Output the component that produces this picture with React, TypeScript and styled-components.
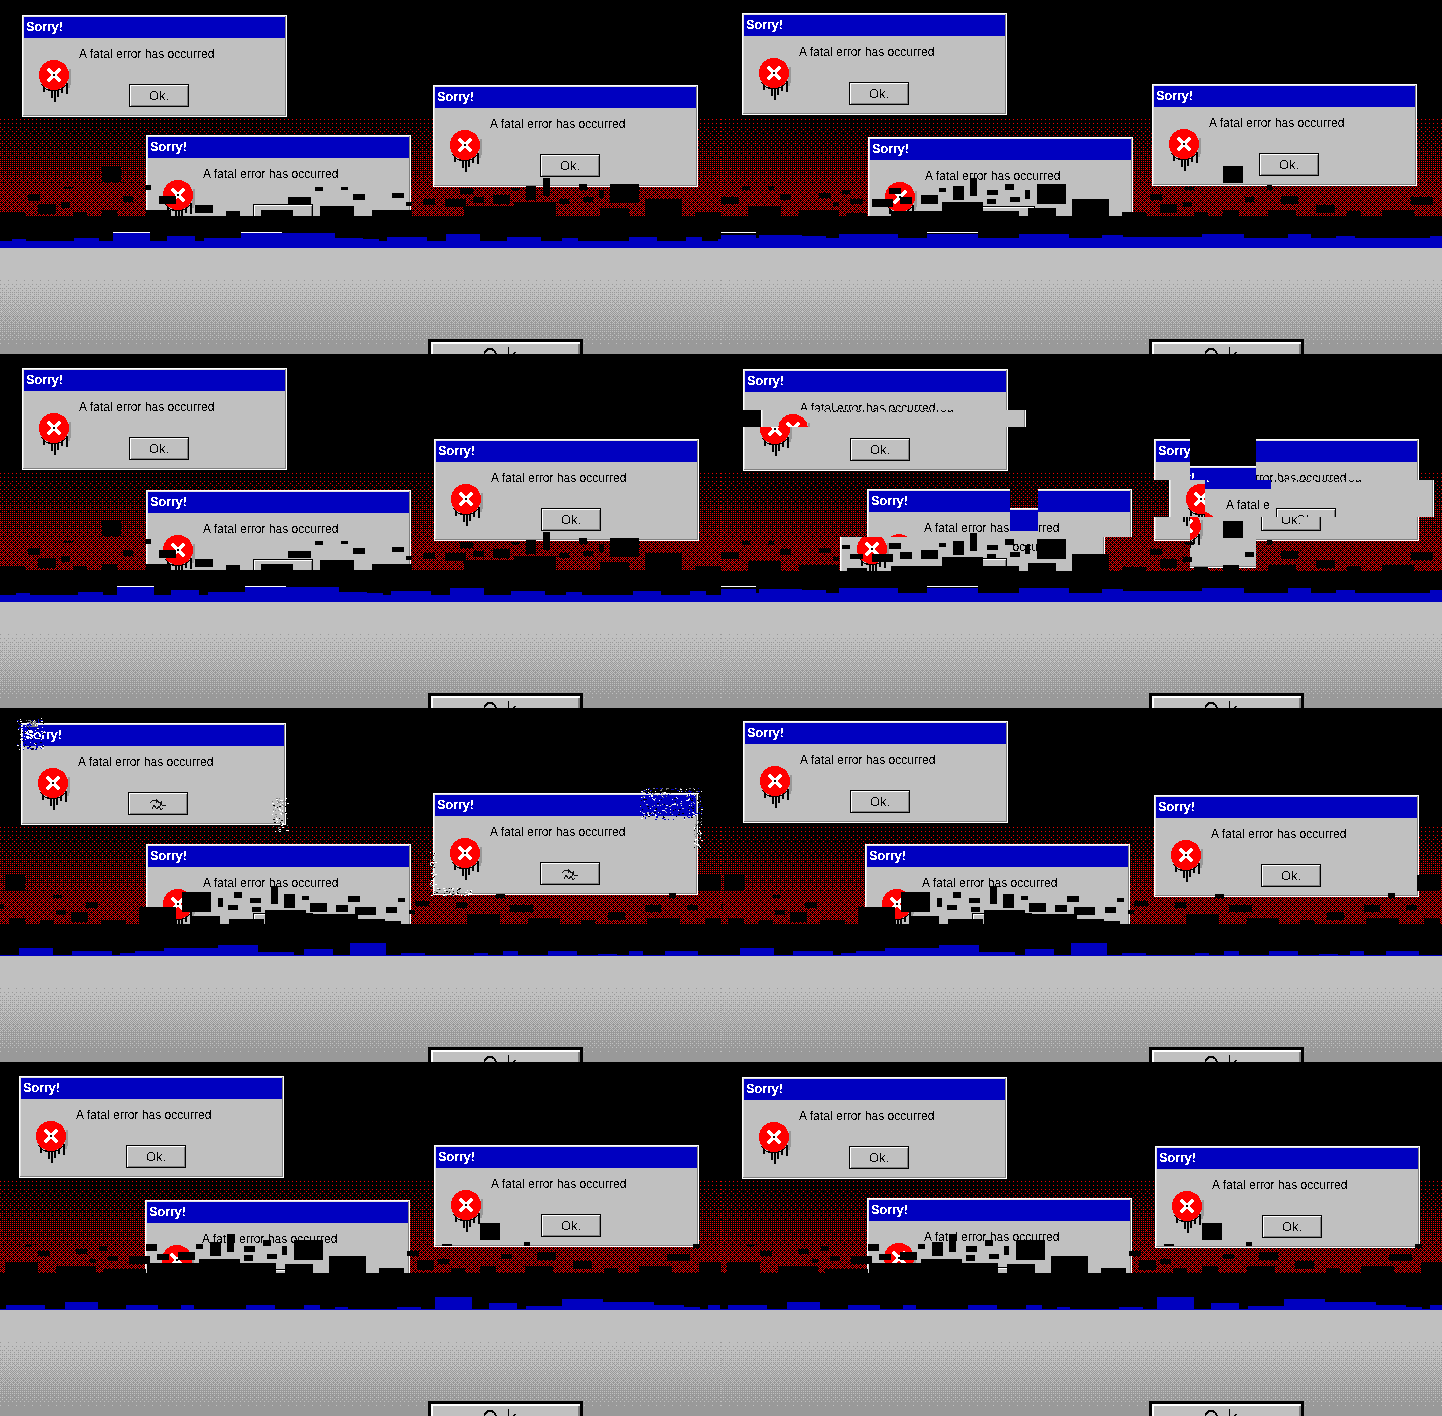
import React, { useEffect, useRef } from "react";
import styled, { createGlobalStyle } from "styled-components";

const WIN_W = 265;
const WIN_H = 102;

const GlobalStyle = createGlobalStyle`
  html, body {
    margin: 0;
    background: #000;
  }
`;

const Page = styled.div`
  display: grid;
  grid-template-columns: 721px 721px;
  grid-auto-rows: 354px;
  width: 1442px;
  overflow: hidden;
`;

const Tile = styled.div<{ $cut: number; $base: number }>`
  position: relative;
  overflow: hidden;
  display: grid;
  grid-template-rows: 110px ${(p) => p.$cut - 110}px ${(p) => p.$base - p.$cut}px ${(p) => 248 - p.$base}px 106px;
  background: #000;
`;

const BlackStrip = styled.div`
  position: relative;
  z-index: 2;
  background: #000;
`;

const BlueStrip = styled.div`
  position: relative;
  z-index: 2;
  background: #0000c0;
`;

const Floor = styled.div`
  position: relative;
  z-index: 2;
  overflow: hidden;
`;

const DitherCanvas = styled.canvas`
  display: block;
`;

const BigOk = styled.div`
  position: absolute;
  left: 428px;
  top: 91px;
  width: 155px;
  height: 40px;
  box-sizing: border-box;
  border: 3px solid #000;
  padding-left: 51px;
  background: #c0c0c0;
  box-shadow: inset 2px 2px 0 #fff, inset -2px -2px 0 #808080;
`;

const BigOkLabel = styled.span`
  display: inline-block;
  font: 26px/30px "Liberation Sans", Arial, sans-serif;
  letter-spacing: 10px;
  transform: scaleX(0.8);
  transform-origin: left top;
  color: #000;
  filter: url(#crisp);
`;

const Overlay = styled.svg`
  position: absolute;
  left: 0;
  top: 0;
  z-index: 3;
  pointer-events: none;
`;

const Spot = styled.div.attrs<{ $x: number; $y: number }>((p) => ({
  style: { left: p.$x, top: p.$y },
}))<{ $x: number; $y: number }>`
  position: absolute;
  z-index: 1;
  width: ${WIN_W}px;
  height: ${WIN_H}px;
`;

const Frame = styled.div`
  width: ${WIN_W}px;
  height: ${WIN_H}px;
  box-sizing: border-box;
  border: 1px solid #fff;
  padding: 1px;
  background: #c0c0c0;
  box-shadow: inset -1px -1px 0 #808080, inset 1px 1px 0 #dfdfdf;
  display: flex;
  flex-direction: column;
`;

const Slice = styled(Frame)`
  position: absolute;
  left: 0;
  top: 0;
`;

const TitleBar = styled.div`
  height: 21px;
  flex: none;
  background: #0000c0;
  color: #fff;
  font: bold 13px/20px "Liberation Sans", Arial, sans-serif;
  letter-spacing: -0.3px;
  padding-left: 2px;
`;

const Body = styled.div`
  display: flex;
  padding: 10px 0 0 13px;
`;

const IconBox = styled.svg`
  flex: none;
  margin-top: 12px;
`;

const Column = styled.div`
  display: flex;
  flex-direction: column;
  margin-left: 2px;
`;

const Message = styled.div`
  font: 12px/13px "Liberation Sans", Arial, sans-serif;
  letter-spacing: 0.03px;
  color: #000;
  white-space: nowrap;
  filter: url(#crisp);
`;

const OkButton = styled.div`
  margin: 23px 0 0 50px;
  width: 60px;
  height: 23px;
  box-sizing: border-box;
  border: 1px solid #000;
  background: #c0c0c0;
  box-shadow: inset 1px 1px 0 #fff, inset -1px -1px 0 #808080;
  display: flex;
  align-items: center;
  justify-content: center;
  font: 13px/21px "Liberation Sans", Arial, sans-serif;
  color: #000;
`;

const OkLabel = styled.span`
  filter: url(#crisp);
`;

const HiddenDefs = styled.svg`
  position: absolute;
  width: 0;
  height: 0;
`;

type Rect = [number, number, number, number];
type Piece = [number, number, number, number, number, number]; // dest x, y, w, h, then dx, dy

interface WinSpec {
  x: number;
  y: number;
  pieces?: Piece[];
  garbled?: boolean;
}

interface TileSpec {
  wins: WinSpec[];
  blocks: Rect[];
  blockDx?: number;
  blockDy?: number;
  bars: number[][];
  barDx?: number;
  lines?: number[][];
  cut: number;
  base: number;
  speckle?: boolean;
}

const BLOCKS_A: Rect[] = [
  [102, 166, 19, 16], [28, 194, 12, 7], [38, 204, 18, 10], [61, 202, 9, 6], [123, 196, 10, 6], [64, 187, 9, 2],
  [145, 185, 6, 5], [159, 196, 17, 8], [195, 205, 18, 8], [226, 211, 14, 6], [315, 187, 8, 4], [341, 187, 7, 3],
  [353, 194, 12, 6], [392, 193, 12, 5], [406, 202, 6, 4], [288, 197, 23, 7], [261, 210, 32, 6], [320, 206, 34, 10],
  [372, 210, 40, 6], [146, 210, 25, 6], [0, 212, 25, 4], [73, 212, 14, 4], [102, 210, 15, 6],
  [610, 184, 29, 19], [645, 199, 37, 17], [600, 208, 29, 8], [543, 178, 7, 18], [526, 186, 10, 14], [514, 202, 42, 14],
  [464, 206, 50, 10], [579, 184, 8, 6], [473, 197, 11, 6], [493, 195, 17, 9], [445, 199, 21, 8], [423, 199, 12, 6],
  [559, 199, 10, 5], [583, 197, 10, 5], [599, 190, 5, 8], [460, 188, 13, 6], [512, 188, 7, 3], [695, 212, 26, 4],
];

const BLOCKS_B: Rect[] = [
  [316, 184, 29, 20], [351, 199, 37, 17], [249, 178, 7, 18], [232, 186, 11, 14], [218, 188, 7, 4], [200, 195, 17, 9],
  [221, 202, 41, 14], [266, 190, 11, 5], [266, 199, 9, 5], [284, 184, 9, 6], [289, 197, 10, 5], [304, 190, 5, 9],
  [151, 199, 21, 8], [168, 188, 12, 6], [179, 197, 12, 7], [170, 211, 128, 5], [307, 208, 28, 8], [401, 212, 24, 4],
  [0, 197, 18, 7], [27, 206, 33, 10], [59, 194, 11, 6], [21, 186, 8, 4], [47, 186, 6, 4], [98, 193, 12, 5],
  [121, 190, 8, 4], [112, 202, 6, 4], [129, 199, 13, 5], [78, 210, 40, 6], [126, 213, 20, 3],
  [502, 166, 20, 17], [546, 185, 5, 5], [464, 187, 9, 3], [429, 194, 12, 6], [462, 202, 9, 5], [524, 197, 9, 5],
  [560, 196, 17, 8], [439, 204, 17, 9], [595, 205, 19, 8], [690, 197, 22, 8], [473, 212, 14, 4], [502, 210, 16, 6],
  [547, 210, 28, 6], [626, 211, 14, 5], [661, 210, 32, 6],
];

const BLOCKS_C: Rect[] = [
  [5, 167, 20, 16], [182, 184, 29, 20], [139, 199, 37, 17], [190, 208, 30, 8], [218, 190, 5, 9], [234, 184, 8, 6],
  [228, 197, 10, 5], [250, 190, 11, 5], [252, 199, 9, 5], [271, 178, 7, 18], [284, 186, 11, 14], [302, 188, 7, 4],
  [310, 195, 17, 9], [336, 197, 12, 7], [348, 188, 12, 6], [355, 199, 21, 8], [386, 199, 11, 6], [398, 190, 7, 4],
  [265, 202, 41, 14], [229, 211, 35, 5], [306, 206, 52, 10], [358, 211, 27, 5], [385, 213, 16, 3],
  [86, 194, 12, 6], [71, 204, 17, 10], [56, 202, 10, 5], [101, 212, 25, 4], [40, 212, 14, 4], [9, 210, 16, 6],
  [0, 196, 4, 5], [53, 187, 9, 3], [415, 193, 14, 5], [456, 194, 11, 6], [467, 206, 33, 10], [510, 197, 23, 7],
  [528, 210, 32, 6], [581, 212, 14, 4], [608, 204, 17, 8], [645, 197, 16, 7], [647, 210, 33, 6], [687, 197, 11, 5],
  [705, 210, 16, 6], [698, 167, 23, 16], [409, 202, 6, 4], [669, 185, 7, 5], [496, 186, 9, 4],
];

const BLOCKS_D: Rect[] = [
  [294, 178, 29, 20], [329, 194, 37, 17], [379, 206, 25, 5], [285, 202, 28, 9], [199, 197, 41, 14], [210, 180, 11, 14],
  [227, 172, 7, 18], [196, 182, 7, 5], [146, 182, 11, 7], [129, 194, 21, 8], [157, 192, 12, 6], [178, 190, 17, 8],
  [244, 184, 11, 6], [244, 193, 9, 6], [263, 178, 8, 6], [267, 192, 10, 5], [282, 184, 5, 9], [147, 201, 129, 10],
  [5, 200, 33, 11], [56, 204, 40, 7], [103, 207, 43, 4], [38, 189, 12, 5], [76, 187, 11, 5], [99, 184, 8, 5],
  [108, 194, 10, 5], [90, 197, 6, 4], [25, 182, 7, 3], [407, 189, 12, 5], [417, 198, 17, 10], [438, 197, 11, 5],
  [451, 206, 14, 5], [480, 204, 16, 7], [480, 161, 20, 17], [501, 192, 11, 5], [537, 190, 19, 8], [525, 204, 28, 7],
  [573, 199, 19, 8], [604, 206, 14, 5], [639, 204, 33, 7], [667, 192, 23, 7], [699, 200, 22, 11], [442, 182, 10, 2],
  [524, 180, 6, 4], [693, 182, 7, 4],
];

const BARS_A = [
  [12, 239, 14], [74, 238, 25], [113, 233, 37], [167, 236, 28], [204, 238, 37], [241, 233, 94], [335, 238, 28],
  [363, 239, 16], [387, 237, 40], [446, 234, 34], [507, 237, 34], [562, 238, 16], [629, 237, 28], [686, 237, 16], [718, 239, 3],
];
const BARS_B = [
  [0, 235, 35], [38, 235, 43], [81, 236, 24], [118, 234, 59], [206, 234, 51], [298, 234, 50], [381, 235, 21],
  [402, 237, 79], [481, 234, 42], [567, 234, 23], [615, 236, 19], [709, 236, 12],
];
const BARS_C = [
  [19, 240, 34], [72, 243, 40], [120, 245, 15], [135, 243, 29], [164, 240, 54], [218, 237, 40], [258, 244, 36],
  [304, 241, 29], [350, 235, 36], [401, 245, 24], [474, 245, 14], [503, 243, 15], [548, 243, 29], [598, 246, 19],
  [629, 243, 14], [665, 243, 33],
];
const BARS_D = [
  [6, 243, 39], [65, 240, 33], [126, 243, 32], [181, 243, 13], [246, 243, 29], [304, 243, 16], [335, 245, 13],
  [397, 245, 24], [435, 235, 37], [489, 241, 28], [526, 244, 36], [562, 237, 41], [603, 240, 51], [654, 243, 30],
  [684, 245, 16], [708, 243, 12],
];

const TILES: TileSpec[] = [
  {
    wins: [{ x: 22, y: 15 }, { x: 146, y: 135 }, { x: 433, y: 85 }],
    blocks: BLOCKS_A,
    bars: BARS_A,
    lines: [[113, 232, 37], [241, 232, 41]],
    cut: 216,
    base: 241,
  },
  {
    wins: [{ x: 21, y: 13 }, { x: 147, y: 137 }, { x: 431, y: 84 }],
    blocks: BLOCKS_B,
    bars: BARS_B,
    lines: [[0, 232, 35], [206, 232, 51]],
    cut: 216,
    base: 238,
  },
  {
    wins: [{ x: 22, y: 14 }, { x: 146, y: 136 }, { x: 434, y: 85 }],
    blocks: BLOCKS_A,
    bars: BARS_A,
    barDx: 4,
    lines: [[117, 232, 37], [245, 232, 41]],
    cut: 216,
    base: 241,
  },
  {
    wins: [
      {
        x: 22,
        y: 15,
        pieces: [[0, 0, 265, 41, 0, 0], [18, 41, 265, 17, 18, 0], [0, 58, 265, 44, 0, 0]],
      },
      {
        x: 146,
        y: 135,
        pieces: [
          [0, 0, 143, 48, 0, 0],
          [171, 0, 94, 48, 0, 0],
          [-27, 48, 170, 54, -27, 0],
          [171, 48, 67, 54, -27, 0],
          [143, 19, 28, 83, 0, 19],
        ],
      },
      {
        x: 433,
        y: 85,
        pieces: [
          [0, 0, 36, 41, 0, 0],
          [102, 0, 163, 41, 0, 0],
          [36, 27, 66, 14, 0, 27],
          [15, 41, 36, 37, 15, 0],
          [51, 41, 66, 37, 15, 27],
          [117, 41, 163, 37, 15, 0],
          [0, 78, 36, 24, 0, 0],
          [102, 78, 163, 24, 0, 0],
          [36, 78, 66, 51, 0, 27],
        ],
      },
    ],
    blocks: BLOCKS_B,
    blockDy: 1,
    bars: BARS_B,
    lines: [[0, 232, 35], [206, 232, 51]],
    cut: 217,
    base: 239,
  },
  {
    wins: [{ x: 21, y: 15, garbled: true }, { x: 146, y: 136 }, { x: 433, y: 85, garbled: true }],
    blocks: BLOCKS_C,
    bars: BARS_C,
    cut: 216,
    base: 247,
    speckle: true,
  },
  {
    wins: [{ x: 22, y: 13 }, { x: 144, y: 136 }, { x: 433, y: 87 }],
    blocks: BLOCKS_C,
    blockDx: -2,
    bars: BARS_C,
    cut: 216,
    base: 247,
  },
  {
    wins: [{ x: 19, y: 14 }, { x: 145, y: 138 }, { x: 434, y: 83 }],
    blocks: BLOCKS_D,
    bars: BARS_D,
    cut: 211,
    base: 247,
  },
  {
    wins: [{ x: 21, y: 15 }, { x: 146, y: 136 }, { x: 434, y: 84 }],
    blocks: BLOCKS_D,
    blockDx: 1,
    bars: BARS_D,
    barDx: 1,
    cut: 211,
    base: 247,
  },
];

// [x, y, w, h, count, colours]
const SPECKLES: [number, number, number, number, number, string[]][] = [
  [17, 10, 27, 32, 200, ["#0000c0", "#fff", "#000", "#0000c0"]],
  [26, 12, 11, 7, 45, ["#808080"]],
  [272, 90, 16, 34, 100, ["#fff", "#808080", "#000", "#fff"]],
  [640, 80, 62, 10, 110, ["#fff", "#808080", "#0000c0"]],
  [640, 90, 62, 22, 240, ["#0000c0", "#fff", "#c0c0c0", "#0000c0", "#000"]],
  [694, 112, 8, 28, 60, ["#fff", "#808080", "#000"]],
  [430, 144, 6, 44, 60, ["#fff", "#808080", "#000"]],
  [436, 180, 36, 8, 80, ["#fff", "#808080", "#000", "#c0c0c0"]],
];

const bayer = [
  [0, 32, 8, 40, 2, 34, 10, 42],
  [48, 16, 56, 24, 50, 18, 58, 26],
  [12, 44, 4, 36, 14, 46, 6, 38],
  [60, 28, 52, 20, 62, 30, 54, 22],
  [3, 35, 11, 43, 1, 33, 9, 41],
  [51, 19, 59, 27, 49, 17, 57, 25],
  [15, 47, 7, 39, 13, 45, 5, 37],
  [63, 31, 55, 23, 61, 29, 53, 21],
];

const Dither: React.FC<{
  width: number;
  height: number;
  from: string;
  to: string;
  phase: number;
  density: (row: number) => number;
}> = ({ width, height, from, to, phase, density }) => {
  const ref = useRef<HTMLCanvasElement>(null);
  useEffect(() => {
    const ctx = ref.current!.getContext("2d")!;
    ctx.fillStyle = from;
    ctx.fillRect(0, 0, width, height);
    ctx.fillStyle = to;
    for (let y = 0; y < height; y++) {
      const d = density(y);
      const line = bayer[(y + phase) % 8];
      for (let x = 0; x < width; x++) {
        if (d > (line[x % 8] + 0.5) / 64) ctx.fillRect(x, y, 1, 1);
      }
    }
  }, [width, height, from, to, phase, density]);
  return <DitherCanvas ref={ref} width={width} height={height} />;
};

// the red stays short of a plain checker pattern
const bandDensity = (row: number) => Math.min((row - 0.5) / 210, 0.4);
const floorDensity = (row: number) => (row - 31) / 66;

const ErrorIcon: React.FC = () => (
  <IconBox width="40" height="44" viewBox="0 0 40 44" shapeRendering="crispEdges">
    <path d="M32 9h2v16h-1v3h-2z" fill="#999" />
    <rect x="6" y="25" width="2" height="7" fill="#000" />
    <rect x="11" y="27" width="2" height="4" fill="#000" />
    <rect x="14" y="27" width="2" height="11" fill="#000" />
    <rect x="17" y="27" width="2" height="15" fill="#000" />
    <rect x="20" y="27" width="2" height="10" fill="#000" />
    <rect x="24" y="27" width="2" height="6" fill="#000" />
    <rect x="29" y="23" width="2" height="11" fill="#000" />
    <path d="M4 23a15 15 0 0 0 26 0v1a15 15 0 0 1-26 0z" fill="#000" />
    <circle cx="17" cy="15" r="15" fill="#ff0000" />
    <path d="M12 10l10 10M22 10l-10 10" stroke="#fff" strokeWidth="4.2" strokeLinecap="square" fill="none" />
    <rect x="16" y="14" width="2" height="2" fill="#000" />
  </IconBox>
);

const Scribble: React.FC = () => (
  <svg width="22" height="14" viewBox="0 0 22 14" shapeRendering="crispEdges">
    <path d="M3 6l3-3h4l2 3 2-1 1 3h4M5 12l2-4 3 4 2-3 2 4 2-2M9 2l1 4M15 4l-2 5" stroke="#111" fill="none" />
  </svg>
);

const WinContent: React.FC<{ garbled?: boolean }> = ({ garbled }) => (
  <>
    <TitleBar>
      <OkLabel>Sorry!</OkLabel>
    </TitleBar>
    <Body>
      <ErrorIcon />
      <Column>
        <Message>A fatal error has occurred</Message>
        <OkButton>{garbled ? <Scribble /> : <OkLabel>Ok.</OkLabel>}</OkButton>
      </Column>
    </Body>
  </>
);

const DialogWindow: React.FC<WinSpec> = ({ x, y, pieces, garbled }) => (
  <Spot $x={x} $y={y}>
    {pieces ? (
      pieces.map(([px, py, w, h, dx, dy], i) => {
        // the clip is given in the window's own coordinates, before the shift
        const sx = px - dx;
        const sy = py - dy;
        return (
          <Slice
            key={i}
            style={{
              transform: `translate(${dx}px, ${dy}px)`,
              clipPath: `inset(${sy}px ${WIN_W - sx - w}px ${WIN_H - sy - h}px ${sx}px)`,
            }}
          >
            <WinContent />
          </Slice>
        );
      })
    ) : (
      <Frame>
        <WinContent garbled={garbled} />
      </Frame>
    )}
  </Spot>
);

function speckleRects() {
  let seed = 1234567;
  const rnd = () => {
    seed = (seed * 16807) % 2147483647;
    return seed / 2147483647;
  };
  const out: { x: number; y: number; s: number; c: string }[] = [];
  for (const [x, y, w, h, n, colours] of SPECKLES) {
    for (let i = 0; i < n; i++) {
      out.push({
        x: x + Math.floor(rnd() * w),
        y: y + Math.floor(rnd() * h),
        s: rnd() > 0.7 ? 2 : 1,
        c: colours[Math.floor(rnd() * colours.length)],
      });
    }
  }
  return out;
}

const GlitchLayer: React.FC<{ spec: TileSpec }> = ({ spec }) => {
  const { blocks, blockDx = 0, blockDy = 0, bars, barDx = 0, lines = [], base, speckle } = spec;
  return (
    <Overlay width="721" height="354" shapeRendering="crispEdges">
      {blocks.map(([x, y, w, h], i) => (
        <rect key={i} x={x + blockDx} y={y + blockDy} width={w} height={h} fill="#000" />
      ))}
      {bars.map(([x, y, w], i) => (
        <rect key={i} x={x + barDx} y={y} width={w} height={Math.max(base, 247) - y + 1} fill="#0000c0" />
      ))}
      {lines.map(([x, y, w], i) => (
        <rect key={i} x={x} y={y} width={w} height={1} fill="#fff" />
      ))}
      {speckle && speckleRects().map((s, i) => <rect key={i} x={s.x} y={s.y} width={s.s} height={1} fill={s.c} />)}
    </Overlay>
  );
};

const App: React.FC = () => (
  <>
    <GlobalStyle />
    <HiddenDefs>
      <filter id="crisp" colorInterpolationFilters="sRGB" x="0" y="0" width="100%" height="100%">
        <feComponentTransfer>
          <feFuncA type="discrete" tableValues="0 0 1 1" />
        </feComponentTransfer>
      </filter>
    </HiddenDefs>
    <Page>
      {TILES.map((spec, i) => (
        <Tile key={i} $cut={spec.cut} $base={spec.base}>
          {spec.wins.map((w, j) => (
            <DialogWindow key={j} {...w} />
          ))}
          <div />
          <Dither width={721} height={spec.cut - 110} from="#000" to="#f00000" phase={7} density={bandDensity} />
          <BlackStrip />
          <BlueStrip />
          <Floor>
            <Dither width={721} height={106} from="#c0c0c0" to="#999999" phase={0} density={floorDensity} />
            <BigOk>
              <BigOkLabel>Ok.</BigOkLabel>
            </BigOk>
          </Floor>
          <GlitchLayer spec={spec} />
        </Tile>
      ))}
    </Page>
  </>
);

export default App;
